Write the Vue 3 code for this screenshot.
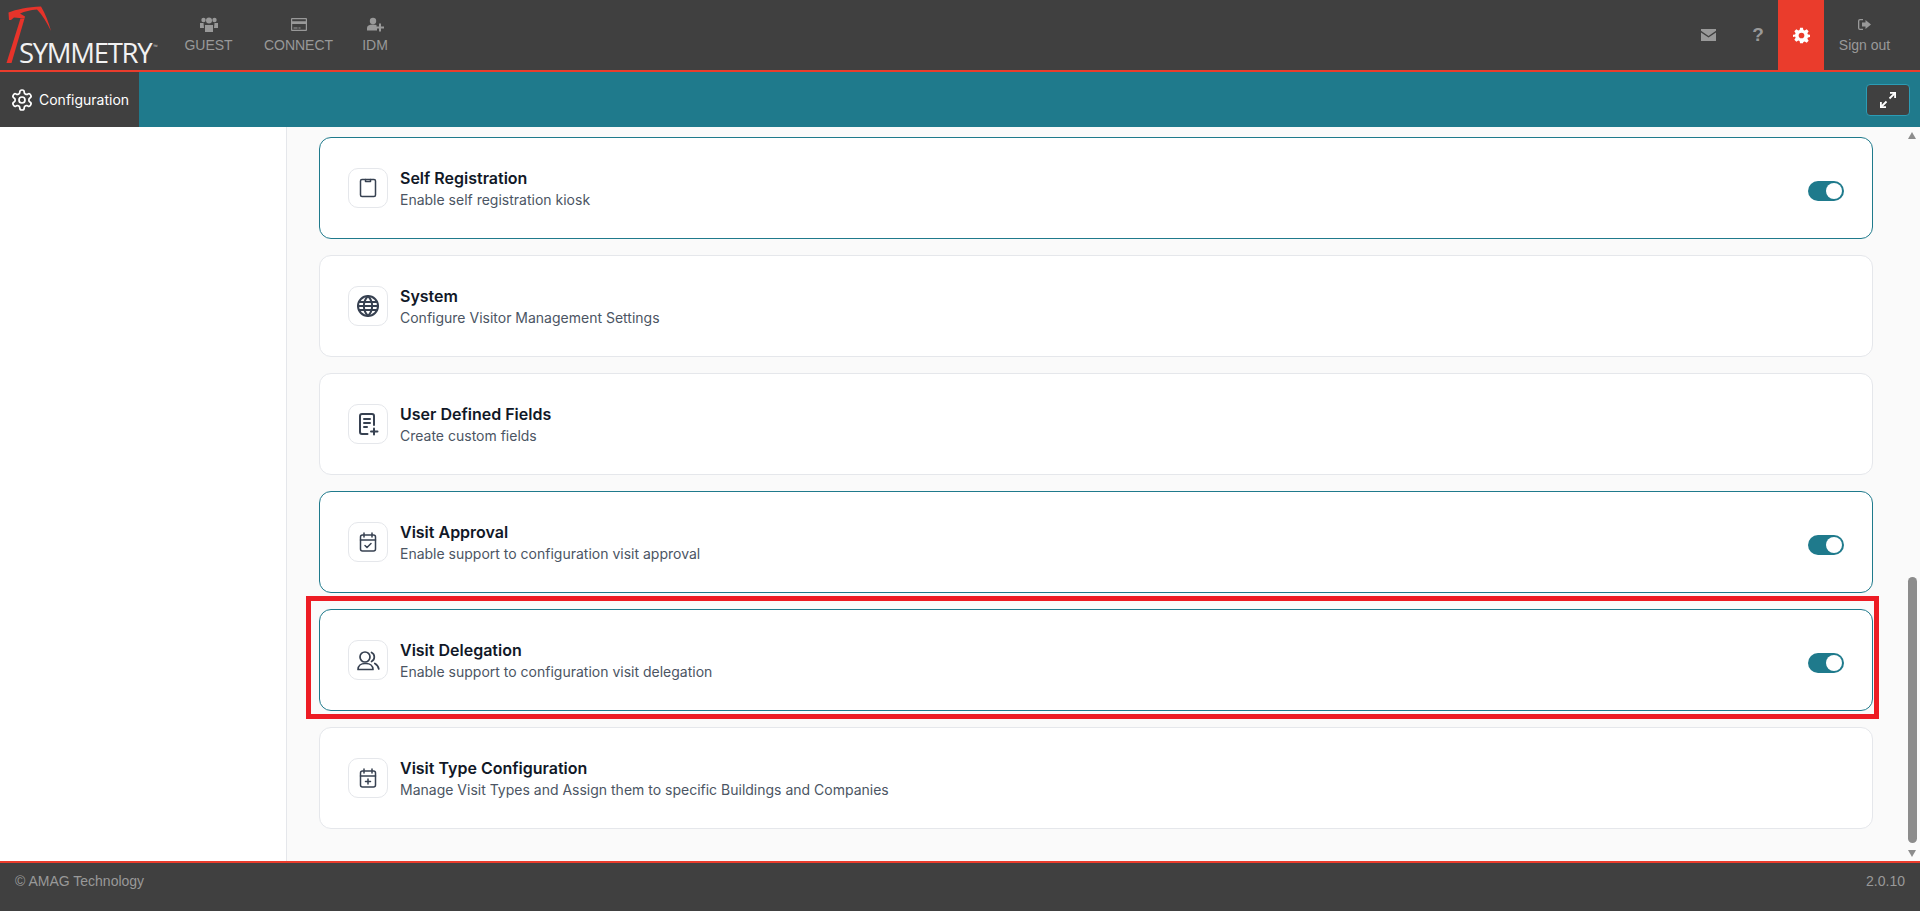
<script setup>
const cards = [
  { title: 'Self Registration', sub: 'Enable self registration kiosk', on: true, paths: ['M6 3.500h12a1.500 1.500 0 0 1 1.500 1.500v14a1.500 1.500 0 0 1-1.500 1.500H6A1.500 1.500 0 0 1 4.500 19V5A1.500 1.500 0 0 1 6 3.500Z', 'M9.500 3.500v2h5v-2'], width: 1.5 },
  { title: 'System', sub: 'Configure Visitor Management Settings', on: false, width: 2, paths: ['M12 2a10 10 0 1 0 0 20a10 10 0 0 0 0-20Z', 'M2 12h20', 'M3.200 8h17.600', 'M3.200 16h17.600', 'M12 2c-5.500 5.800-5.500 14.200 0 20', 'M12 2c5.500 5.800 5.500 14.200 0 20'] },
  { title: 'User Defined Fields', sub: 'Create custom fields', on: false, width: 2, paths: ['M11.500 22H6a2 2 0 0 1-2-2V4a2 2 0 0 1 2-2h10a2 2 0 0 1 2 2v9', 'M8 7h6', 'M8 11h6', 'M8 15h3', 'M18 16.500v6', 'M15 19.500h6.500'] },
  { title: 'Visit Approval', sub: 'Enable support to configuration visit approval', on: true, width: 1.5, paths: ['M6.500 5h11a2 2 0 0 1 2 2V19a2 2 0 0 1-2 2h-11a2 2 0 0 1-2-2V7a2 2 0 0 1 2-2Z', 'M8 3v4', 'M16 3v4', 'M4.500 10h15', 'M9 15.500l2 2 4-4'] },
  { title: 'Visit Delegation', sub: 'Enable support to configuration visit delegation', on: true, width: 1.7, paths: ['M9 4a5 5 0 1 0 0 10a5 5 0 0 0 0-10Z', 'M2 21.500c0-3.800 3-6 7-6h1c4 0 7 2.200 7 6Z', 'M15.500 4.500a5 5 0 0 1 0 9', 'M18.800 15.500c2 1 3.500 3 4 5.500'] },
  { title: 'Visit Type Configuration', sub: 'Manage Visit Types and Assign them to specific Buildings and Companies', on: false, width: 1.5, paths: ['M6.500 5h11a2 2 0 0 1 2 2V19a2 2 0 0 1-2 2h-11a2 2 0 0 1-2-2V7a2 2 0 0 1 2-2Z', 'M8 3v4', 'M16 3v4', 'M4.500 10h15', 'M12 13v5', 'M9.500 15.500h5'] }
]
</script>

<template>
  <div class="page">
    <header class="top">
      <div class="logo">
        <svg class="eagle" width="56" height="66" viewBox="0 0 56 66" aria-hidden="true">
          <path d="M6.500 63 20.500 18.500h4L11.500 63Z" fill="#e7332a" />
          <path d="M9 20 8.500 12.500C16 9.500 28 7 41 6.500 45.500 14 48.500 22 51 31 47 23 42.500 15 37 9.500 30 10 25 11.500 20 13.500L25 16.500 24.500 18.500 14 17.500 11 20Z" fill="#e7332a" />
        </svg>
        <span class="brand">SYMMETRY<sup>™</sup></span>
      </div>
      <nav class="nav">
        <a class="item guest">
          <svg width="18" height="15" viewBox="0 0 18 15"><circle cx="3.500" cy="3" r="2.200" /><circle cx="14.500" cy="3" r="2.200" /><circle cx="9" cy="3.500" r="3" /><path d="M0 6h3.500L4 11H0ZM14.500 6H18v5h-4ZM5 8h8v7H5Z" /></svg>
          <span>GUEST</span>
        </a>
        <a class="item connect">
          <svg width="16" height="13" viewBox="0 0 16 13"><path fill-rule="evenodd" d="M1 0h14a1 1 0 0 1 1 1v11a1 1 0 0 1-1 1H1a1 1 0 0 1-1-1V1a1 1 0 0 1 1-1Zm.200 1.200v2h13.600v-2Zm0 4.800v5.800h13.600V6ZM2.500 9.500h4v1h-4Zm5 0h2v1h-2Z" /></svg>
          <span>CONNECT</span>
        </a>
        <a class="item idm">
          <svg width="17" height="14" viewBox="0 0 17 14"><circle cx="6" cy="3.500" r="3.200" /><path d="M0 13V10.500C0 8.500 2 7 6 7c1.500 0 2.500.2 3.500.6V9.500H10v3.500H0Z" /><path d="M12 6h2v3h3v2h-3v3h-2v-3H9V9h3Z" /></svg>
          <span>IDM</span>
        </a>
      </nav>
      <div class="spacer"></div>
      <div class="tools">
        <span class="tool mail">
          <svg width="15" height="12" viewBox="0 0 15 12"><path d="M0 0h15v1.800L7.500 7 0 1.800ZM0 3.500 7.500 8.500 15 3.500V12H0Z" /></svg>
        </span>
        <span class="tool help">?</span>
        <span class="tool cog">
          <svg width="17" height="17" viewBox="0 0 24 24"><path fill="#fff" d="M10 1h4l.7 3.200 1.800.8L19.300 3.200l2.800 2.800L20.300 8.800l.8 1.800L24 11v3l-2.900.7-.8 1.800 1.800 2.800-2.800 2.800-2.800-1.800-1.800.8L14 23h-4l-.7-3.100-1.800-.8-2.800 1.800-2.800-2.800 1.800-2.800-.8-1.800L0 14v-3l2.900-.4.800-1.800L1.900 6l2.800-2.800L7.500 5l1.800-.8Z" /><circle cx="12" cy="12" r="4" fill="#ea3c2c" /></svg>
        </span>
        <a class="item signout">
          <svg width="13" height="11" viewBox="0 0 13 11"><path d="M5 0v1.300H2A.7.7 0 0 0 1.300 2v7a.7.7 0 0 0 .7.700h3V11H2a2 2 0 0 1-2-2V2a2 2 0 0 1 2-2Z" /><path d="M7.500 1 13 5.500 7.500 10V7.500H4v-4h3.500Z" /></svg>
          <span>Sign out</span>
        </a>
      </div>
    </header>

    <div class="bar">
      <div class="tab">
        <svg width="24" height="24" viewBox="0 0 24 24" fill="none" stroke="#fff" stroke-width="1.700" stroke-linecap="round" stroke-linejoin="round"><path d="M12.220 2h-.44a2 2 0 0 0-2 2v.18a2 2 0 0 1-1 1.730l-.43.250a2 2 0 0 1-2 0l-.15-.080a2 2 0 0 0-2.730.730l-.220.380a2 2 0 0 0 .730 2.730l.150.100a2 2 0 0 1 1 1.720v.510a2 2 0 0 1-1 1.740l-.150.090a2 2 0 0 0-.730 2.730l.220.380a2 2 0 0 0 2.730.730l.150-.080a2 2 0 0 1 2 0l.430.250a2 2 0 0 1 1 1.730V20a2 2 0 0 0 2 2h.44a2 2 0 0 0 2-2v-.18a2 2 0 0 1 1-1.730l.430-.250a2 2 0 0 1 2 0l.150.080a2 2 0 0 0 2.730-.730l.220-.390a2 2 0 0 0-.730-2.730l-.150-.080a2 2 0 0 1-1-1.740v-.500a2 2 0 0 1 1-1.740l.150-.090a2 2 0 0 0 .730-2.730l-.220-.380a2 2 0 0 0-2.730-.730l-.150.080a2 2 0 0 1-2 0l-.430-.250a2 2 0 0 1-1-1.730V4a2 2 0 0 0-2-2Z" /><circle cx="12" cy="12" r="3" /></svg>
        <span>Configuration</span>
      </div>
      <button class="expand" type="button" aria-label="Expand">
        <svg width="18" height="18" viewBox="0 0 18 18" fill="none" stroke="#fff" stroke-width="1.800"><path d="M11 1.900h5.100V7" /><path d="M16 2 10.500 7.500" /><path d="M1.900 11v5.100H7" /><path d="M2 16 7.500 10.500" /></svg>
      </button>
    </div>

    <main class="main">
      <aside class="side"></aside>
      <section class="content">
        <article v-for="c in cards" :key="c.title" class="card" :class="{ on: c.on }">
          <div class="ico">
            <svg width="24" height="24" viewBox="0 0 24 24" fill="none" stroke="#374151" :stroke-width="c.width" stroke-linecap="round" stroke-linejoin="round">
              <path v-for="p in c.paths" :key="p" :d="p" />
            </svg>
          </div>
          <div class="txt">
            <h3>{{ c.title }}</h3>
            <p>{{ c.sub }}</p>
          </div>
          <span v-if="c.on" class="toggle"><i></i></span>
          <div v-if="c.title === 'Visit Delegation'" class="mark"></div>
        </article>
      </section>
      <div class="scroll">
        <span class="up"></span>
        <span class="thumb"></span>
        <span class="down"></span>
      </div>
    </main>

    <footer class="foot">
      <span>© AMAG Technology</span>
      <span>2.0.10</span>
    </footer>
  </div>
</template>

<style>
html, body { margin: 0; padding: 0; overflow: hidden; }
</style>

<style scoped>
.page { height: 911px; display: flex; flex-direction: column; font-family: "Liberation Sans", Arial, sans-serif; background: #fff; }
.top { height: 70px; flex: none; display: flex; background: #404040; border-bottom: 2px solid #ea3c2c; }
.logo { width: 172px; flex: none; position: relative; }
.eagle { position: absolute; left: 0; top: 0; }
.brand { position: absolute; left: 19px; top: 35px; font: 400 27.500px/36px "Open Sans", sans-serif; letter-spacing: -1.300px; color: #f2f2f2; white-space: nowrap; }
.brand sup { font-size: 6px; vertical-align: 14px; line-height: 0; letter-spacing: 0; margin-left: 2px; color: #bbb; }
.nav { display: flex; }
.item { display: flex; flex-direction: column; align-items: center; color: #999; font-size: 14px; line-height: 20px; }
.item svg { fill: #999; height: 15px; margin-top: 17px; margin-bottom: 3px; }
.guest { width: 47px; margin-left: 13px; }
.connect { width: 69px; margin-left: 32px; }
.idm { width: 26px; margin-left: 29px; }
.spacer { flex: 1; }
.tools { display: flex; align-items: stretch; }
.tool { display: flex; align-items: center; justify-content: center; }
.mail { width: 15px; margin-right: 36px; }
.mail svg { fill: #999; }
.help { width: 12px; margin-right: 14px; color: #999; font-size: 19px; font-weight: 700; }
.cog { width: 46px; background: #ea3c2c; }
.signout { width: 80px; margin-right: 16px; padding-left: 1px; box-sizing: border-box; }
.signout svg { height: 11px; margin-top: 19px; margin-bottom: 5px; }

.bar { height: 55px; flex: none; display: flex; align-items: center; justify-content: space-between; background: #1f7a8c; }
.tab { width: 139px; height: 100%; box-sizing: border-box; padding-left: 10px; display: flex; align-items: center; gap: 5px; background: #404040; color: #fff; font: 400 14px/20px Inter, sans-serif; }
.expand { width: 44px; height: 32px; margin-right: 10px; padding: 0; display: flex; align-items: center; justify-content: center; background: #404040; border: 1px solid #2b9cb5; border-radius: 4px; }

.main { flex: 1; min-height: 0; display: flex; background: #fafafa; }
.side { width: 286px; flex: none; background: #fff; border-right: 1px solid #e5e7eb; }
.content { flex: 1; min-width: 0; padding: 10px 31px 0 32px; display: flex; flex-direction: column; gap: 16px; overflow: hidden; }
.card { position: relative; height: 102px; flex: none; box-sizing: border-box; padding: 0 28px; display: flex; align-items: center; gap: 12px; background: #fff; border: 1px solid #e5e7eb; border-radius: 12px; }
.card.on { border-color: #1f7a8c; }
.ico { width: 40px; height: 40px; flex: none; box-sizing: border-box; display: flex; align-items: center; justify-content: center; background: #fff; border: 1px solid #e5e7eb; border-radius: 10px; }
.txt { flex: 1; font-family: Inter, sans-serif; }
h3 { margin: 0; font-size: 16px; line-height: 22px; font-weight: 600; color: #111827; }
p { margin: 1px 0 0; font-size: 14px; line-height: 20px; font-weight: 400; color: #4b5563; }
.toggle { width: 36px; height: 20px; margin-top: 6px; flex: none; box-sizing: border-box; padding: 2px; display: flex; justify-content: flex-end; background: #1f7a8c; border-radius: 10px; }
.toggle i { width: 16px; height: 16px; background: #fff; border-radius: 50%; }
.mark { position: absolute; left: -14px; right: -7px; top: -14px; bottom: -9px; border: 5px solid #ed1c24; pointer-events: none; }

.scroll { width: 16px; flex: none; display: flex; flex-direction: column; align-items: center; position: relative; }
.up { margin-top: 5px; width: 0; height: 0; border-left: 4.500px solid transparent; border-right: 4.500px solid transparent; border-bottom: 7px solid #8c8c8c; }
.thumb { width: 9px; height: 266px; margin-top: 438px; background: #8c8c8c; border-radius: 5px; }
.down { margin-top: 7px; width: 0; height: 0; border-left: 4.500px solid transparent; border-right: 4.500px solid transparent; border-top: 7px solid #8c8c8c; }

.foot { flex: none; display: flex; justify-content: space-between; align-items: flex-start; padding: 8px 15px 0; box-sizing: border-box; background: #404040; border-top: 2px solid #ea3c2c; height: 50px; color: #999; font-size: 14px; line-height: 20px; }
</style>
